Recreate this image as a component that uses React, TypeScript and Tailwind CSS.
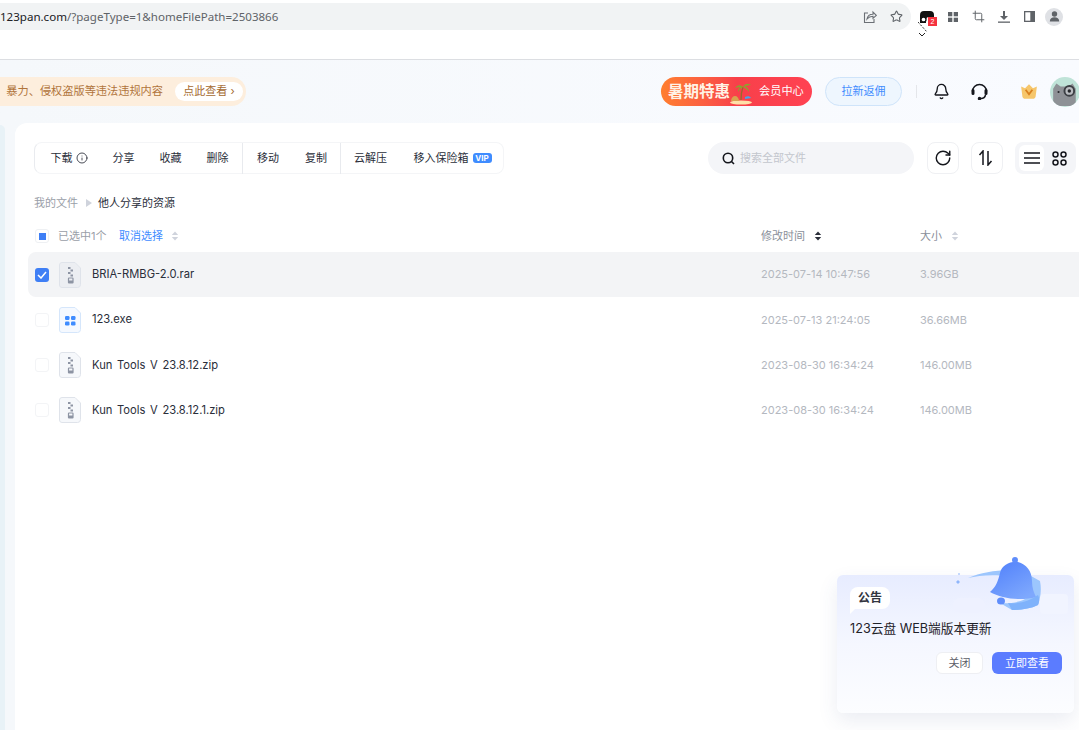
import React from 'react';
import { Bell, Crop, Info, RotateCw, Star } from 'lucide-react';

const cjk = "font-['Inter','Noto_Sans_CJK_SC',sans-serif]";

const SortIcon: React.FC<{ dark?: boolean }> = ({ dark }) => (
  <svg width="8" height="10" viewBox="0 0 8 10" className={dark ? 'text-[#2b2f3a]' : 'text-[#cfd3dc]'}>
    <path d="M4 0.5 7.2 4H0.8Z" fill="currentColor" />
    <path d="M4 9.5 7.2 6H0.8Z" fill="currentColor" />
  </svg>
);

const ZipIcon: React.FC<{ selected?: boolean }> = ({ selected }) => (
  <svg width="22" height="26" viewBox="0 0 22 26">
    <path
      d="M3 .5h13l5.500 5.500v16.500a3 3 0 0 1-3 3H3a2.500 2.500 0 0 1-2.500-2.500V3A2.500 2.500 0 0 1 3 .5Z"
      fill={selected ? '#eceef2' : '#f6f8fb'}
      stroke="#dfe3ea"
    />
    <path d="M9 5h2.500v2H9zM11.500 7.500H14v2h-2.500zM9 10h2.500v2H9zM11.500 12.500H14v2h-2.500z" fill="#8d94a3" />
    <rect x="9.500" y="16" width="4.500" height="5" rx="0.500" fill="none" stroke="#8d94a3" strokeWidth="1.200" />
    <rect x="9.500" y="18.500" width="4.500" height="2.500" fill="#8d94a3" />
  </svg>
);

const ExeIcon: React.FC = () => (
  <svg width="22" height="26" viewBox="0 0 22 26">
    <path
      d="M3 .5h13l5.500 5.500v16.500a3 3 0 0 1-3 3H3a2.500 2.500 0 0 1-2.500-2.500V3A2.500 2.500 0 0 1 3 .5Z"
      fill="#f5f9ff"
      stroke="#d5e6fb"
    />
    <rect x="6" y="9" width="4.500" height="4" rx="1.200" fill="#3f8cff" />
    <rect x="12" y="9" width="4.500" height="4" rx="1.200" fill="#3f8cff" />
    <rect x="6" y="14.500" width="4.500" height="4" rx="1.200" fill="#3f8cff" />
    <rect x="12" y="14.500" width="4.500" height="4" rx="1.200" fill="#3f8cff" />
  </svg>
);

const BrowserBar: React.FC = () => (
  <div className="h-[60px] shrink-0 border-b border-[#dcdee2] bg-white pt-[3px]">
    <div className="flex h-[27px] items-center">
      <div className="flex h-full w-[911px] shrink-0 items-center rounded-r-full bg-[#f1f3f4]">
        <span className="flex-1 text-[11.550px] text-[#5f6368] font-['Noto_Sans',sans-serif]">
          <span className="text-[#202124]">123pan.com</span>/?pageType=1&amp;homeFilePath=2503866
        </span>
        <svg width="14" height="14" viewBox="0 0 14 14" fill="none" stroke="#6b6f75" strokeWidth="1.100" className="mr-[13px]">
          <path d="M5 3H1.500v9.500h9.500V9" />
          <path d="M4 9c.5-3 3-4.800 6-4.800V2l3.300 3.300L10 8.300V6.300C7.500 6.300 5.500 7.200 4 9Z" />
        </svg>
        <Star size={13} strokeWidth={2} className="mr-[8px] text-[#5f6368]" />
      </div>
      <div className="relative ml-[9px] flex h-[13px] w-[14px] items-center justify-center overflow-visible">
        <svg width="14" height="12" viewBox="0 0 14 12">
          <path d="M0 12V4a4 4 0 0 1 4-4h6a4 4 0 0 1 4 4v2H9a3 3 0 0 0-3 3v3Z" fill="#111" />
          <circle cx="3.500" cy="8.500" r="2.500" fill="#fff" stroke="#111" strokeWidth="1.300" />
        </svg>
        <span className="absolute left-[8px] top-[7px] flex h-[9px] w-[9px] items-center justify-center bg-[#f5333f] text-[7px] leading-none text-white font-['Liberation_Sans',sans-serif]">
          2
        </span>
      </div>
      <svg width="10" height="10" viewBox="0 0 10 10" fill="#5f6368" className="ml-[14px]">
        <rect width="4.300" height="4.300" />
        <rect x="5.700" width="4.300" height="4.300" />
        <rect y="5.700" width="4.300" height="4.300" />
        <rect x="5.700" y="5.700" width="4.300" height="4.300" />
      </svg>
      <Crop size={13} strokeWidth={1.800} className="ml-[14px] text-[#5f6368]" />
      <svg width="12" height="12" viewBox="0 0 12 12" fill="#5f6368" className="ml-[13px]">
        <path d="M5 0h2v5h3L6 9 2 5h3Z" />
        <rect y="10.500" width="12" height="1.300" />
      </svg>
      <svg width="11" height="11" viewBox="0 0 11 11" className="ml-[14px]">
        <rect width="11" height="11" fill="#5f6368" />
        <rect x="1.300" y="1.300" width="5" height="8.400" fill="#fff" />
      </svg>
      <div className="ml-[10px] flex h-[18px] w-[18px] items-center justify-center rounded-full bg-[#dfe1e5]">
        <svg width="11" height="11" viewBox="0 0 11 11" fill="#5f6368">
          <circle cx="5.500" cy="3" r="2.700" />
          <path d="M.8 10.500c0-2.800 2.100-4.200 4.700-4.200s4.700 1.400 4.700 4.200Z" />
        </svg>
      </div>
    </div>
  </div>
);

const HeaderRow: React.FC = () => (
  <div className={`flex h-[63px] shrink-0 items-center ${cjk}`}>
    <div className="flex h-[29px] w-[246px] shrink-0 items-center justify-end overflow-hidden rounded-r-full bg-[#fdeedd] pr-[3px] text-[#b0743b]">
      <span className="mr-[12px] whitespace-nowrap text-[11.200px]">暴力、侵权盗版等违法违规内容</span>
      <span className="flex h-[19px] w-[68px] items-center justify-center whitespace-nowrap rounded-full bg-white text-[11px] text-[#a56a30]">
        点此查看 ›
      </span>
    </div>
    <div className="ml-[415px] flex h-[29px] w-[151px] shrink-0 items-center rounded-full bg-gradient-to-r from-[#ff7e2e] via-[#f8404a] to-[#ff4252] pl-[7px]">
      <span className="whitespace-nowrap text-[15.500px] font-bold leading-none text-[#fff3e6]">暑期特惠</span>
      <svg width="24" height="28" viewBox="0 0 24 28" className="ml-[-1px] shrink-0">
        <ellipse cx="12" cy="24.500" rx="11" ry="2" fill="#ffe0a8" />
        <path d="M12 22c0-5 .5-9 2-13" stroke="#9a6a2b" strokeWidth="1.300" fill="none" />
        <path d="M14 9C11 6 8 7 6 10c3-1 5-1 8-1ZM14 9c2-4 5-4 8-2-3 0-5 1-8 2ZM14 9c3-1 6 1 6 5-2-3-4-4-6-5ZM14 9c-2-1-5 1-5 5 2-3 3-4 5-5Z" fill="#8ca32e" />
        <path d="M2 23c0-3 2-5 4-5s4 2 4 5Z" fill="#d9a24f" />
        <path d="M16 19c2-1 5-1 6 1l-6 1Z" fill="#4aa3e8" />
      </svg>
      <span className="ml-[6px] whitespace-nowrap text-[11.200px] text-white">会员中心</span>
    </div>
    <div className="ml-[13px] flex h-[29px] w-[77px] shrink-0 items-center justify-center rounded-full border border-[#cfe4fa] bg-[#eef6fe] text-[11px] text-[#3f8cff]">
      拉新返佣
    </div>
    <div className="ml-[14px] h-[13px] w-px shrink-0 bg-[#e4e6ea]" />
    <Bell size={17} strokeWidth={1.900} className="ml-[16px] shrink-0 text-[#14161c]" />
    <svg width="17" height="17" viewBox="0 0 17 17" fill="none" stroke="#14161c" strokeWidth="1.500" className="ml-[21px] shrink-0">
      <path d="M1.500 8.500a7 7 0 0 1 14 0" />
      <path d="M2 7.500v3M15 7.500v3" strokeWidth="3" strokeLinecap="round" />
      <path d="M14.500 12c-.5 2.500-2.500 3.500-4.500 3.500" />
      <circle cx="8.500" cy="15.500" r="1" fill="#14161c" />
    </svg>
    <svg width="18" height="17" viewBox="0 0 16 15" className="ml-[32px] shrink-0">
      <path d="M1 3l3.500 1.500L8 1l3.500 3.500L15 3l-1 8a3 3 0 0 1-3 3H5a3 3 0 0 1-3-3Z" fill="#f6c66b" />
      <path d="M5 6l3 4 3-4" fill="none" stroke="#d9801f" strokeWidth="1.600" />
    </svg>
    <div className="ml-[12px] flex h-[30px] w-[30px] shrink-0 items-center justify-center overflow-hidden rounded-full bg-[#bfe3d8]">
      <svg width="28" height="28" viewBox="0 0 26 26">
        <path d="M2 26V10l3-5 4 3h7l4-3 3 5v16Z" fill="#8e9196" />
        <circle cx="17" cy="12" r="4.500" fill="#b9bcc0" stroke="#3c3f44" strokeWidth="1.800" />
        <circle cx="17" cy="12" r="1.600" fill="#26282c" />
        <circle cx="7" cy="13" r="1" fill="#26282c" />
      </svg>
    </div>
  </div>
);

const tool = 'whitespace-nowrap px-[12.500px] text-[11px] text-[#2a2e3a]';

const Toolbar: React.FC = () => (
  <div className="flex items-center pl-[19px] pr-[3px] pt-[19px]">
    <div className="flex h-[32px] w-[470px] shrink-0 items-center rounded-lg border border-[#f4f5f7] border-l-[#e9ebef] pl-[3px]">
      <span className={`${tool} flex items-center gap-[3px]`}>
        下载 <Info size={12} strokeWidth={1.700} />
      </span>
      <span className={tool}>分享</span>
      <span className={tool}>收藏</span>
      <span className={tool}>删除</span>
      <div className="ml-[1px] mr-[1.500px] h-[31px] w-px shrink-0 bg-[#e8eaee]" />
      <span className={tool}>移动</span>
      <span className={`${tool} ml-[1px]`}>复制</span>
      <div className="mx-[0.500px] h-[31px] w-px shrink-0 bg-[#e8eaee]" />
      <span className={tool}>云解压</span>
      <span className={`${tool} ml-[1.500px] flex items-center gap-[4px]`}>
        移入保险箱
        <span className="flex h-[10px] w-[19px] items-center justify-center rounded-[3px] bg-[#3f8cff] text-[8px] font-bold leading-none text-white">
          VIP
        </span>
      </span>
    </div>
    <div className="ml-[204px] flex h-[32px] w-[206px] shrink-0 items-center rounded-full bg-[#f4f5f8] pl-[14px]">
      <svg width="13" height="13" viewBox="0 0 13 13" fill="none" stroke="#14161c" strokeWidth="1.600">
        <circle cx="6" cy="6" r="4.700" />
        <path d="M9.500 9.500 12 12" />
      </svg>
      <span className="ml-[5px] text-[11px] text-[#c3c6cd]">搜索全部文件</span>
    </div>
    <div className="ml-[13px] flex h-[32px] w-[32px] shrink-0 items-center justify-center rounded-lg border border-[#eff0f3]">
      <RotateCw size={18} strokeWidth={1.900} className="text-[#14161c]" />
    </div>
    <div className="ml-[12px] flex h-[32px] w-[32px] shrink-0 items-center justify-center rounded-lg border border-[#eff0f3]">
      <svg width="15" height="16" viewBox="0 0 15 16" fill="none" stroke="#14161c" strokeWidth="1.500" className="mr-[3px]">
        <path d="M5 15V1L1.500 5" />
        <path d="M10 1v14l3.500-4" />
      </svg>
    </div>
    <div className="ml-[12px] flex h-[32px] w-[61px] shrink-0 items-center rounded-lg bg-[#f4f5f8] pl-[4px]">
      <div className="flex h-[26px] w-[25px] items-center justify-center rounded-md bg-white">
        <svg width="16" height="12" viewBox="0 0 16 12" stroke="#14161c" strokeWidth="1.400">
          <path d="M0 1h16M0 6h16M0 11h16" />
        </svg>
      </div>
      <svg width="15" height="15" viewBox="0 0 15 15" fill="none" stroke="#14161c" strokeWidth="1.500" className="ml-[8px]">
        <circle cx="3.500" cy="3.500" r="2.500" />
        <circle cx="11.500" cy="3.500" r="2.500" />
        <circle cx="3.500" cy="11.500" r="2.500" />
        <circle cx="11.500" cy="11.500" r="2.500" />
      </svg>
    </div>
  </div>
);

const files = [
  { name: 'BRIA-RMBG-2.0.rar', date: '2025-07-14 10:47:56', size: '3.96GB', kind: 'zip', selected: true },
  { name: '123.exe', date: '2025-07-13 21:24:05', size: '36.66MB', kind: 'exe', selected: false },
  { name: 'Kun Tools V 23.8.12.zip', date: '2023-08-30 16:34:24', size: '146.00MB', kind: 'zip', selected: false },
  { name: 'Kun Tools V 23.8.12.1.zip', date: '2023-08-30 16:34:24', size: '146.00MB', kind: 'zip', selected: false },
];

const FileList: React.FC = () => (
  <div className="pl-[13px]">
    <div className="flex h-[20px] items-center pl-[7px] text-[11px]">
      <div className="flex h-[14px] w-[14px] shrink-0 items-center justify-center rounded-[3px] border border-[#eef0f3]">
        <div className="h-[7px] w-[7px] bg-[#3f7ff5]" />
      </div>
      <span className="ml-[9px] w-[61px] shrink-0 whitespace-nowrap text-[#9a9ea8]">已选中1个</span>
      <span className="w-[52px] shrink-0 whitespace-nowrap text-[#3f8cff]">取消选择</span>
      <SortIcon />
      <span className="ml-[582px] w-[53px] shrink-0 whitespace-nowrap text-[#8a8f9a]">修改时间</span>
      <SortIcon dark />
      <span className="ml-[98px] w-[31px] shrink-0 text-[#8a8f9a]">大小</span>
      <SortIcon />
    </div>
    <div className="mt-[6px]">
      {files.map((f) => (
        <div
          key={f.name}
          className={`flex h-[45.200px] items-center pl-[7px] text-[11px] ${f.selected ? 'rounded-l-lg bg-[#f3f4f6]' : ''}`}
        >
          {f.selected ? (
            <div className="flex h-[14px] w-[14px] shrink-0 items-center justify-center rounded-[3px] bg-[#3f7ff5]">
              <svg width="10" height="8" viewBox="0 0 10 8" fill="none" stroke="#fff" strokeWidth="1.500">
                <path d="M1 4l3 3 5-6" />
              </svg>
            </div>
          ) : (
            <div className="h-[14px] w-[14px] shrink-0 rounded-[3px] border border-[#f3f4f6]" />
          )}
          <div className="ml-[10px] flex w-[22px] shrink-0">{f.kind === 'zip' ? <ZipIcon selected={f.selected} /> : <ExeIcon />}</div>
          <span className="ml-[11px] w-[669px] shrink-0 text-[11.200px] text-[#2a2e3a] [word-spacing:1.500px]">{f.name}</span>
          <span className="w-[159px] shrink-0 text-[#b4b8bf]">{f.date}</span>
          <span className="text-[#b4b8bf]">{f.size}</span>
        </div>
      ))}
    </div>
  </div>
);

const Notice: React.FC = () => (
  <div className={`absolute left-[837px] top-[575px] h-[138px] w-[237px] rounded-md bg-gradient-to-b from-[#e7ecff] via-[#f5f7ff] to-[#fcfdff] shadow-[0_8px_20px_rgba(60,80,140,0.1)] ${cjk}`}>
    <div className="absolute left-[116px] top-[23px] h-[15px] w-[32px] rounded-full bg-[#eef1ff]" />
    <div className="absolute left-[203px] top-[19px] h-[20px] w-[28px] rounded bg-[#f1f4ff]" />
    <svg width="96" height="62" viewBox="0 0 96 62" className="absolute left-[115px] top-[-18px]">
      <defs>
        <linearGradient id="bellFill" x1="0" y1="0" x2="0.700" y2="1">
          <stop offset="0" stopColor="#4f7ffb" />
          <stop offset="1" stopColor="#7ea8fd" />
        </linearGradient>
      </defs>
      <path d="M6 23l2 2-2 2-2-2ZM7 16l1 1-1 1-1-1Z" fill="#8fb6fb" />
      <path d="M16 21C32 14 52 12 70 14L88 24C90 34 88 42 86 48 78 52 68 53 60 53L48 46C60 47 74 44 78 38 80 30 72 24 60 20 44 17 28 18 16 21Z" fill="#9cc6fd" />
      <path d="M38 35C44 30 46 24 48 16 50 8 58 4 66 5 74 7 80 14 80 24 80 31 82 36 84 40 70 44 50 42 38 35Z" fill="url(#bellFill)" />
      <circle cx="63" cy="3" r="3" fill="#5f8dfb" />
      <ellipse cx="49" cy="44" rx="4" ry="3.500" fill="#5f8dfb" />
      <path d="M56 46C68 47 78 44 86 38 88 42 87 46 86 48 78 52 68 53 60 53Z" fill="#7fb2fb" />
    </svg>
    <div className="relative ml-[13px] mt-[12px] flex h-[22px] w-[40px] items-center justify-center rounded-[8px] rounded-bl-none bg-white text-[12px] font-bold text-[#33363f]">
      公告
      <svg width="5" height="5" viewBox="0 0 5 5" className="absolute left-0 top-[22px]">
        <path d="M0 0h5L0 5Z" fill="#fff" />
      </svg>
    </div>
    <div className="relative ml-[13px] mt-[10px] text-[12.700px] text-[#1f2229]">123云盘 WEB端版本更新</div>
    <div className="relative mt-[14px] flex justify-end gap-[9px] pr-[12px]">
      <span className="flex h-[22px] w-[47px] items-center justify-center rounded-md border border-[#eeeff3] bg-white text-[11px] text-[#5c6068]">
        关闭
      </span>
      <span className="flex h-[22px] w-[70px] items-center justify-center rounded-md bg-[#5b7cff] text-[11px] text-white">
        立即查看
      </span>
    </div>
  </div>
);

const App: React.FC = () => {
  return (
    <div className="relative flex h-[730px] w-[1079px] flex-col overflow-hidden bg-gradient-to-r from-[#f5f8fb] to-[#f9fbff]">
      <BrowserBar />
      <HeaderRow />
      <div className="flex min-h-0 flex-1">
        <div className="mt-[2px] w-[5px] shrink-0 rounded-tr-md bg-[#e8f2f7]" />
        <div className={`ml-[10px] flex-1 rounded-tl-xl bg-white ${cjk}`}>
          <Toolbar />
          <div className="mt-[21px] flex h-[16px] items-center pl-[19px] text-[11px]">
            <span className="text-[#9a9ea8]">我的文件</span>
            <svg width="6" height="8" viewBox="0 0 6 8" className="ml-[8px] mr-[6px]">
              <path d="M0 0l6 4-6 4Z" fill="#cfd3dc" />
            </svg>
            <span className="text-[#2a2e3a]">他人分享的资源</span>
          </div>
          <div className="mt-[15px]">
            <FileList />
          </div>
        </div>
      </div>
      <Notice />
      <svg width="10" height="16" viewBox="0 0 10 16" fill="none" className="absolute left-[918px] top-[22px]">
        <path d="M0 0l9 10" stroke="#333" strokeDasharray="2 1.500" />
        <path d="M1 11l3 3 3-3" stroke="#222" />
      </svg>
    </div>
  );
};

export default App;
